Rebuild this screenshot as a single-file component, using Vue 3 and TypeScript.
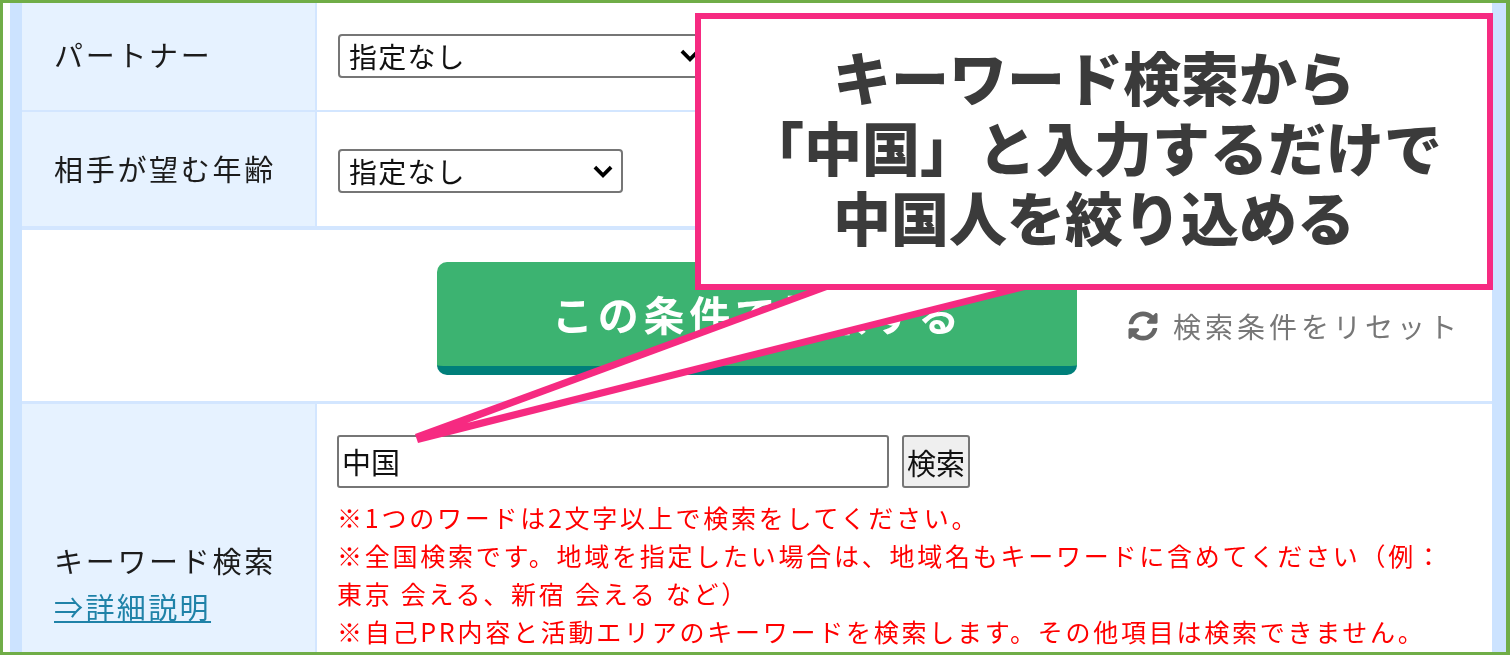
<script setup lang="ts">
const notes: string[] = [
  '※1つのワードは2文字以上で検索をしてください。',
  '※全国検索です。地域を指定したい場合は、地域名もキーワードに含めてください（例：東京 会える、新宿 会える など）',
  '※自己PR内容と活動エリアのキーワードを検索します。その他項目は検索できません。',
]
</script>

<template>
  <div class="shot">
    <div class="panel">
      <div class="row row-partner">
        <div class="label label-partner">パートナー</div>
        <div class="field field-partner">
          <div class="select select-wide"><span>指定なし</span><svg class="chev" viewBox="0 0 16 10"><path d="M1.5 1.5l6.5 6.5 6.5-6.5" fill="none" stroke="#000" stroke-width="3" /></svg></div>
        </div>
      </div>
      <div class="row row-age">
        <div class="label label-age">相手が望む年齢</div>
        <div class="field field-age">
          <div class="select"><span>指定なし</span><svg class="chev" viewBox="0 0 16 10"><path d="M1.5 1.5l6.5 6.5 6.5-6.5" fill="none" stroke="#000" stroke-width="3" /></svg></div>
        </div>
      </div>
      <div class="actions">
        <button class="submit" type="button">この条件で検索する</button>
        <a class="reset">
          <svg class="reset-icon" viewBox="0 0 512 512"><path fill="#666" d="M370.72 133.28C339.458 104.008 298.888 87.962 255.848 88c-77.458.068-144.328 53.178-162.791 126.85-1.344 5.363-6.122 9.15-11.651 9.15H24.103c-7.498 0-13.194-6.807-11.807-14.176C33.933 94.924 134.813 8 256 8c66.448 0 126.791 26.136 171.315 68.685L463.03 40.97C478.149 25.851 504 36.559 504 57.941V192c0 13.255-10.745 24-24 24H345.941c-21.382 0-32.09-25.851-16.971-40.971l41.75-41.749zM32 296h134.059c21.382 0 32.09 25.851 16.971 40.971l-41.75 41.75c31.262 29.273 71.835 45.319 114.876 45.28 77.418-.07 144.315-53.144 162.787-126.849 1.344-5.363 6.122-9.15 11.651-9.15h57.304c7.498 0 13.194 6.807 11.807 14.176C478.067 417.076 377.187 504 256 504c-66.448 0-126.791-26.136-171.315-68.685L48.97 471.03C33.851 486.149 8 475.441 8 454.059V320c0-13.255 10.745-24 24-24z" /></svg>
          <span>検索条件をリセット</span>
        </a>
      </div>
      <div class="row row-keyword">
        <div class="label label-stack">
          <div>キーワード検索</div>
          <a class="detail">⇒詳細説明</a>
        </div>
        <div class="field field-top">
          <div class="search">
            <div class="input">中国</div>
            <button class="search-btn" type="button">検索</button>
          </div>
          <p v-for="n in notes" :key="n" class="note">{{ n }}</p>
        </div>
      </div>
    </div>

    <svg class="tail" viewBox="0 0 1510 655">
      <polygon points="415,434 813,288 1033,288 418,443" fill="#f62a81" />
      <polygon points="467,423 846,283 1025,283" fill="#fff" />
    </svg>
    <div class="callout">キーワード検索から<br />「中国」と入力するだけで<br />中国人を絞り込める</div>
  </div>
</template>

<style>
html, body { margin: 0; background: #fff; }
</style>

<style scoped>
.shot {
  position: relative;
  width: 1510px;
  height: 655px;
  box-sizing: border-box;
  overflow: hidden;
  border: solid #70ad47;
  border-width: 3px 4px 3px 3px;
  padding-left: 7px;
  background: #fff;
  font-family: "Noto Sans CJK JP", "Noto Sans", sans-serif;
  color: #222;
}
.panel {
  box-sizing: border-box;
  width: 1496px;
  border-left: 12px solid #cce3ff;
  border-right: 14px solid #cce3ff;
  background: #fff;
  filter: blur(0.4px);
}
.row { display: flex; box-sizing: border-box; }
.row-partner { height: 109px; border-bottom: 2px solid #d3e6ff; }
.row-age { height: 114px; }
.row-keyword { height: 360px; border-top: 3px solid #d3e6ff; }
.label {
  box-sizing: border-box;
  width: 295px;
  flex: none;
  padding-left: 32px;
  display: flex;
  align-items: center;
  background: #e6f2ff;
  border-right: 2px solid #d3e6ff;
  font-size: 29px;
  letter-spacing: 2.7px;
  color: #1c1c1c;
}
.label-partner { padding-bottom: 6px; }
.label-age { padding-bottom: 2px; }
.label-stack {
  flex-direction: column;
  align-items: flex-start;
  justify-content: center;
  gap: 0;
  line-height: 46px;
}
.detail {
  color: #1f82a8;
  text-decoration: underline;
  letter-spacing: 2.4px;
}
.field { flex: 1; display: flex; align-items: center; padding-left: 21px; }
.field-partner { padding-bottom: 2px; }
.field-age { padding-top: 4px; }
.field-top {
  flex-direction: column;
  align-items: flex-start;
  padding-top: 31px;
  padding-left: 20px;
}
.select {
  box-sizing: border-box;
  width: 285px;
  height: 44px;
  display: flex;
  align-items: center;
  justify-content: space-between;
  padding: 0 8px 0 9px;
  border: 2px solid #767676;
  border-radius: 4px;
  background: #fff;
  font-size: 28px;
  letter-spacing: 1.2px;
  color: #111;
}
.select-wide { width: 372px; }
.chev { width: 20px; height: 13px; }
.actions {
  box-sizing: border-box;
  height: 175px;
  border-top: 4px solid #d3e6ff;
  display: flex;
  align-items: flex-start;
  padding: 32px 0 0 415px;
}
.submit {
  box-sizing: border-box;
  width: 640px;
  height: 113px;
  padding: 0 0 2px 2px;
  border: none;
  border-bottom: 9px solid #007f7a;
  border-radius: 10px;
  background: #3cb371;
  color: #fff;
  font: 700 41px "Noto Sans CJK JP", sans-serif;
  letter-spacing: 4.8px;
}
.reset {
  display: flex;
  align-items: center;
  gap: 15px;
  margin: 46px 0 0 51px;
  color: #777;
  font-size: 28px;
  letter-spacing: 4px;
  line-height: 36px;
}
.reset-icon { width: 30px; height: 30px; }
.search { display: flex; gap: 13px; margin-bottom: 10px; }
.input {
  box-sizing: border-box;
  width: 552px;
  height: 53px;
  padding-left: 3px;
  border: 2px solid #767676;
  border-radius: 3px;
  font-size: 29px;
  line-height: 49px;
  color: #111;
  background: #fff;
}
.search-btn {
  box-sizing: border-box;
  width: 68px;
  height: 53px;
  padding: 0;
  border: 2px solid #767676;
  border-radius: 3px;
  background: #efefef;
  color: #111;
  font: 400 29px "Noto Sans CJK JP", sans-serif;
}
.note {
  margin: 0;
  width: 1110px;
  font-size: 25px;
  line-height: 38px;
  letter-spacing: 2.75px;
  color: #f00;
}
.tail {
  position: absolute;
  left: -3px;
  top: -3px;
  width: 1510px;
  height: 655px;
}
.callout {
  position: absolute;
  left: 692px;
  top: 10px;
  box-sizing: border-box;
  width: 798px;
  height: 277px;
  padding-bottom: 12px;
  border: 6px solid #f62a81;
  background: #fff;
  display: flex;
  align-items: center;
  justify-content: center;
  text-align: center;
  font-size: 58px;
  font-weight: 900;
  line-height: 70px;
  color: #3b3b3b;
}
</style>
